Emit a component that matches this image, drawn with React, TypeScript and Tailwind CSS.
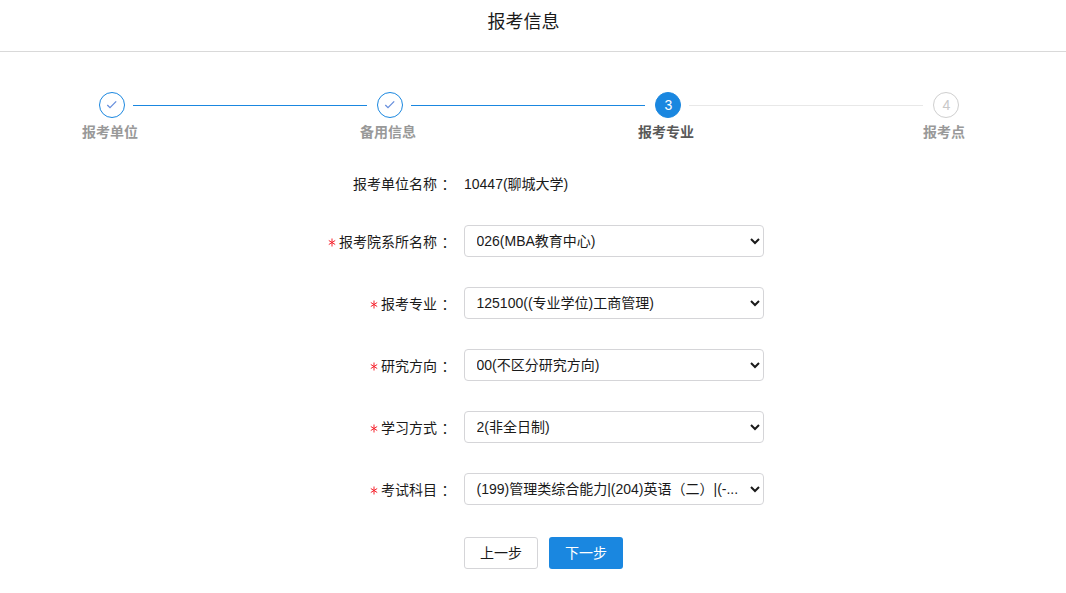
type Step = { title: string; status: "done" | "active" | "wait" };
type Field = { label: string; value: string };

const steps: Step[] = [
    { title: "报考单位", status: "done" },
    { title: "备用信息", status: "done" },
    { title: "报考专业", status: "active" },
    { title: "报考点", status: "wait" },
];

const fields: Field[] = [
    { label: "报考院系所名称", value: "026(MBA教育中心)" },
    { label: "报考专业", value: "125100((专业学位)工商管理)" },
    { label: "研究方向", value: "00(不区分研究方向)" },
    { label: "学习方式", value: "2(非全日制)" },
    { label: "考试科目", value: "(199)管理类综合能力|(204)英语（二）|(-..." },
];

const circleStyles = {
    done: "border-[#1a87e0] bg-white",
    active: "border-[#1a87e0] bg-[#1a87e0] text-white",
    wait: "border-[#cfcfcf] bg-white text-[#c8c8c8]",
};

function StepItem({ step, index }: { step: Step; index: number }) {
    const last = index === steps.length - 1;
    return (
        <li className={last ? "w-[26px]" : "w-[278px]"}>
            <div className="flex items-center">
                <span className={`flex size-[26px] shrink-0 items-center justify-center rounded-full border text-sm ${circleStyles[step.status]}`}>
                    {step.status === "done" ? (
                        <svg className="-ml-px" width="12" height="10" viewBox="0 0 12 10" fill="none" stroke="#668edc" strokeWidth="1.3">
                            <path d="M1.3 5 4 7.6 10.2 1.4" />
                        </svg>
                    ) : (
                        <span className="pl-px">{index + 1}</span>
                    )}
                </span>
                {!last && (
                    <span className={`mr-[10px] ml-2 mt-px h-px flex-1 ${step.status === "done" ? "bg-[#1a87e0]" : "bg-[#e8e8e8]"}`} />
                )}
            </div>
            <div className={`-ml-[17px] mt-1 w-14 whitespace-nowrap text-center text-sm leading-5 font-bold ${step.status === "active" ? "text-[#595959]" : "text-[#999]"}`}>
                {step.title}
            </div>
        </li>
    );
}

function Label({ text, required }: { text: string; required?: boolean }) {
    return (
        <label className={`flex w-[452px] items-center justify-end ${required ? "pt-0.5" : ""}`}>
            {required && (
                <svg className="mr-[3px]" width="8" height="9" viewBox="0 0 8 9" stroke="#f5222d" strokeWidth="1">
                    <path d="M4 .5v8M.8 2.5l6.4 4M7.2 2.5l-6.4 4" />
                </svg>
            )}
            <span className="mr-px">{text}</span>
            <span className="-mr-0 w-[14px] font-['Noto_Sans_CJK_TC',sans-serif]">：</span>
        </label>
    );
}

export default function App() {
    return (
        <div className="h-[593px] overflow-hidden bg-white font-['Liberation_Sans','Noto_Sans_CJK_SC',sans-serif] text-sm text-[#1a1a1a]">
            <header className="flex h-[52px] justify-center border-b border-[#d9d9d9] pt-[5px] pr-[19px]">
                <h1 className="text-lg leading-[34px]">报考信息</h1>
            </header>
            <ol className="mt-10 ml-[99px] flex">
                {steps.map((step, i) => (
                    <StepItem key={step.title} step={step} index={i} />
                ))}
            </ol>
            <form className="mt-[26px]">
                <div className="flex h-8 items-center gap-3">
                    <Label text="报考单位名称" />
                    <span>10447(聊城大学)</span>
                </div>
                <div className="mt-[25px] flex flex-col gap-[30px]">
                    {fields.map((field) => (
                        <div key={field.label} className="flex h-8 items-center gap-3">
                            <Label text={field.label} required />
                            <select className="h-8 w-[300px] rounded border border-[#d5d5d8] bg-white pr-1 pl-[7.5px] text-sm text-[#1a1a1a]">
                                <option>{field.value}</option>
                            </select>
                        </div>
                    ))}
                </div>
                <div className="mt-8 ml-[464px] flex gap-[11px]">
                    <button type="button" className="h-8 w-[74px] rounded-[3px] border border-[#d5d5d8] bg-white">上一步</button>
                    <button type="button" className="h-8 w-[74px] rounded-[3px] bg-[#1a87e0] text-white">下一步</button>
                </div>
            </form>
        </div>
    );
}
